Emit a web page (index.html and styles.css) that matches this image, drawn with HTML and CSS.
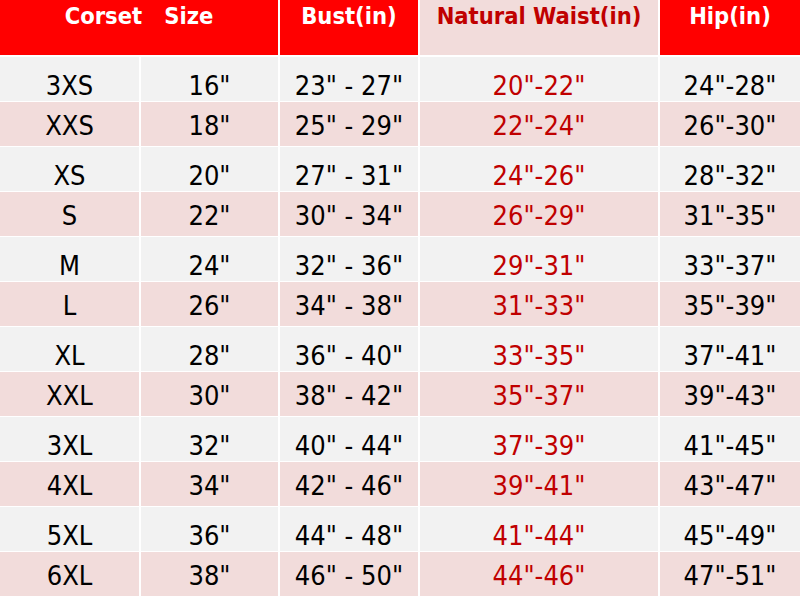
FILE: index.html
```html
<!DOCTYPE html>
<html>
<head>
<meta charset="utf-8">
<link rel="stylesheet" href="styles.css">
</head>
<body>
<div class="chart">
  <div class="head red span2">Corset   Size</div>
  <div class="head red">Bust(in)</div>
  <div class="head pinkhead">Natural Waist(in)</div>
  <div class="head red">Hip(in)</div>

  <div class="c g">3XS</div><div class="c g">16"</div><div class="c g">23" - 27"</div><div class="c g w">20"-22"</div><div class="c g">24"-28"</div>
  <div class="c p">XXS</div><div class="c p">18"</div><div class="c p">25" - 29"</div><div class="c p w">22"-24"</div><div class="c p">26"-30"</div>
  <div class="c g">XS</div><div class="c g">20"</div><div class="c g">27" - 31"</div><div class="c g w">24"-26"</div><div class="c g">28"-32"</div>
  <div class="c p">S</div><div class="c p">22"</div><div class="c p">30" - 34"</div><div class="c p w">26"-29"</div><div class="c p">31"-35"</div>
  <div class="c g">M</div><div class="c g">24"</div><div class="c g">32" - 36"</div><div class="c g w">29"-31"</div><div class="c g">33"-37"</div>
  <div class="c p">L</div><div class="c p">26"</div><div class="c p">34" - 38"</div><div class="c p w">31"-33"</div><div class="c p">35"-39"</div>
  <div class="c g">XL</div><div class="c g">28"</div><div class="c g">36" - 40"</div><div class="c g w">33"-35"</div><div class="c g">37"-41"</div>
  <div class="c p">XXL</div><div class="c p">30"</div><div class="c p">38" - 42"</div><div class="c p w">35"-37"</div><div class="c p">39"-43"</div>
  <div class="c g">3XL</div><div class="c g">32"</div><div class="c g">40" - 44"</div><div class="c g w">37"-39"</div><div class="c g">41"-45"</div>
  <div class="c p">4XL</div><div class="c p">34"</div><div class="c p">42" - 46"</div><div class="c p w">39"-41"</div><div class="c p">43"-47"</div>
  <div class="c g">5XL</div><div class="c g">36"</div><div class="c g">44" - 48"</div><div class="c g w">41"-44"</div><div class="c g">45"-49"</div>
  <div class="c p">6XL</div><div class="c p">38"</div><div class="c p">46" - 50"</div><div class="c p w">44"-46"</div><div class="c p">47"-51"</div>
</div>
</body>
</html>
```
FILE: styles.css
```css
html, body {
  margin: 0;
  padding: 0;
  background: #ffffff;
}
body {
  width: 800px;
  height: 596px;
  overflow: hidden;
  font-family: "DejaVu Sans Condensed", "DejaVu Sans", sans-serif;
}
.chart {
  display: grid;
  grid-template-columns: 139px 137px 138px 238px 140px;
  grid-template-rows: 56px repeat(12, 44px);
  column-gap: 2px;
  row-gap: 1px;
}
.head {
  height: 55px;
  box-sizing: border-box;
  padding-top: 5px;
  text-align: center;
  font-weight: bold;
  font-size: 23.5px;
  line-height: 23.5px;
  white-space: pre;
}
.red {
  background: #ff0000;
  color: #ffffff;
}
.pinkhead {
  background: #f2dcdb;
  color: #c00000;
}
.span2 {
  grid-column: span 2;
}
.c {
  box-sizing: border-box;
  text-align: center;
  font-size: 27px;
  line-height: 27px;
  color: #000000;
}
.g {
  background: #f2f2f2;
  padding-top: 15px;
}
.p {
  background: #f2dcdb;
  padding-top: 10px;
}
.w {
  color: #c00000;
}
```
